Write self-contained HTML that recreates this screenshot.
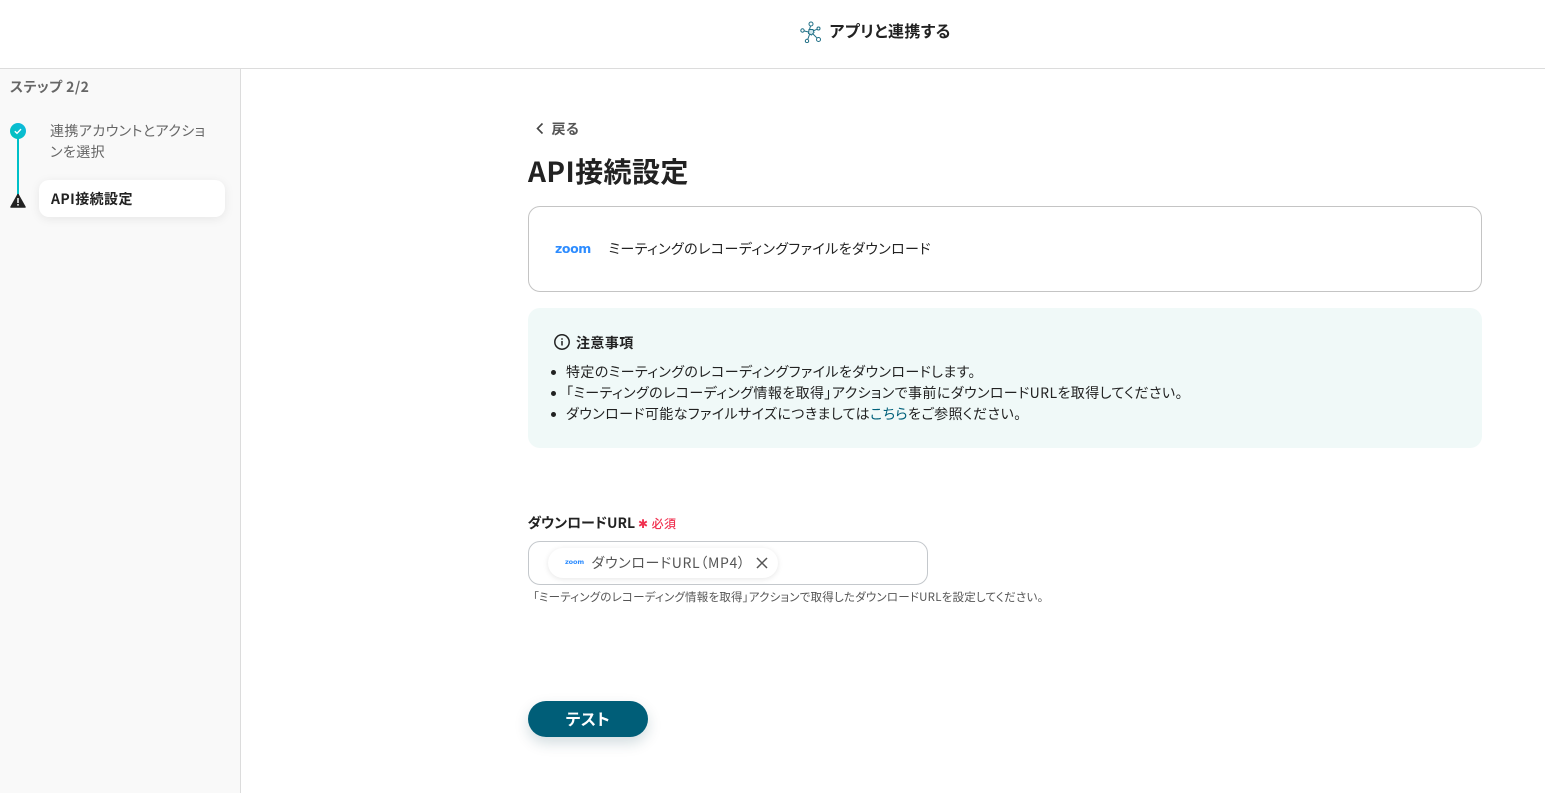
<!DOCTYPE html>
<html lang="ja"><head><meta charset="utf-8"><title>API接続設定</title>
<style>
html,body{margin:0;padding:0}
body{width:1545px;height:793px;overflow:hidden;background:#fff;position:relative;font-family:"Noto Sans CJK JP","Liberation Sans",sans-serif;color:#222;font-feature-settings:"palt";letter-spacing:.42px}
.a{position:absolute;white-space:nowrap}
.zoom{font-family:"DejaVu Sans",sans-serif;font-weight:700;color:#2d8cff}
</style></head><body>
<div class="a" style="left:0;top:68px;width:1545px;height:1px;background:#dcdcdc"></div>
<div class="a" style="left:0;top:69px;width:240px;height:724px;background:#f9f9f9;border-right:1px solid #dcdcdc"></div>

<svg class="a" style="left:799.500px;top:21px" width="22" height="22" viewBox="0 0 22 22" fill="none" stroke="#1f6f86" stroke-width="1">
<path d="M9.500 8.500L10.500 5M13 10L16.800 8.300M13 13L16.800 16.800M9.500 13.500L7.800 18.300M8.500 11L4.300 10" />
<path d="M9 8.500h4l1 3-2.500 2.500-3-1.500z" fill="#cfe6ec"/>
<circle cx="11" cy="3" r="2"/><circle cx="18.500" cy="7.500" r="1.500"/><circle cx="18.500" cy="18.500" r="2"/><circle cx="7" cy="20" r="1.700"/><circle cx="2.500" cy="9.500" r="1.700"/>
</svg>
<div class="a" style="left:829.500px;top:19px;font-size:16px;line-height:22px;font-weight:700;color:#222">アプリと連携する</div>

<div class="a" style="left:10px;top:77px;font-size:14px;line-height:20px;font-weight:700;color:#666">ステップ 2/2</div>
<div class="a" style="left:17px;top:131px;width:2px;height:64px;background:#00c0c8"></div>
<svg class="a" style="left:10px;top:123px" width="16" height="16" viewBox="0 0 16 16"><defs><linearGradient id="g" x1="0" y1="1" x2="1" y2="0"><stop offset="0" stop-color="#00c2b8"/><stop offset="1" stop-color="#10b8e0"/></linearGradient></defs><circle cx="8" cy="8" r="8" fill="url(#g)"/><path d="M4.800 8.200l2.200 2.100 4-4.200" fill="none" stroke="#fff" stroke-width="1.400"/></svg>
<svg class="a" style="left:10px;top:193px" width="16" height="15" viewBox="0 0 16 15"><path d="M8 1.500L15 14H1z" fill="#222" stroke="#222" stroke-width="1.500" stroke-linejoin="round"/><path d="M8 5v5M8 11v1.600" stroke="#fff" stroke-width="1.500"/></svg>
<div class="a" style="left:50px;top:121px;font-size:14px;line-height:21px;color:#666">連携アカウントとアクショ<br>ンを選択</div>
<div class="a" style="left:39px;top:180px;width:186px;height:37px;background:#fff;border-radius:10px;box-shadow:0 2px 10px rgba(0,0,0,.08)"></div>
<div class="a" style="left:51px;top:189px;font-size:14px;line-height:21px;font-weight:700;color:#222">API接続設定</div>

<svg class="a" style="left:535px;top:122px" width="10" height="13" viewBox="0 0 10 13"><path d="M7.500 1.500L2.500 6.500l5 5" fill="none" stroke="#444" stroke-width="1.600"/></svg>
<div class="a" style="left:551.500px;top:119px;font-size:14px;line-height:21px;font-weight:700;color:#555">戻る</div>
<div class="a" style="left:528px;top:152px;font-size:28px;line-height:38px;font-weight:700;color:#222">API接続設定</div>

<div class="a" style="left:528px;top:206px;width:952px;height:84px;border:1px solid #c4c4c4;border-radius:12px"></div>
<div class="a zoom" style="left:555px;top:240px;font-size:12.500px;line-height:17px;letter-spacing:-.4px">zoom</div>
<div class="a" style="left:608.500px;top:239px;font-size:14px;line-height:21px;color:#222">ミーティングのレコーディングファイルをダウンロード</div>

<div class="a" style="left:528px;top:308px;width:954px;height:140px;background:#f0f9f8;border-radius:12px"></div>
<svg class="a" style="left:553px;top:333px" width="18" height="18" viewBox="0 0 18 18" fill="none"><circle cx="9" cy="9" r="7.200" stroke="#222" stroke-width="1.500"/><path d="M9 8v4.500M9 5.200v1.500" stroke="#222" stroke-width="1.500"/></svg>
<div class="a" style="left:576px;top:333px;font-size:14px;line-height:21px;font-weight:700;color:#222">注意事項</div>
<div class="a" style="left:548px;top:368px;width:5px;height:5px;margin:2px 0 0 3px;border-radius:50%;background:#222"></div>
<div class="a" style="left:548px;top:389px;width:5px;height:5px;margin:2px 0 0 3px;border-radius:50%;background:#222"></div>
<div class="a" style="left:548px;top:410px;width:5px;height:5px;margin:2px 0 0 3px;border-radius:50%;background:#222"></div>
<div class="a" style="left:566px;top:362px;font-size:14px;line-height:21px;color:#222">特定のミーティングのレコーディングファイルをダウンロードします。</div>
<div class="a" style="left:566px;top:383px;font-size:14px;line-height:21px;color:#222">「ミーティングのレコーディング情報を取得」アクションで事前にダウンロードURLを取得してください。</div>
<div class="a" style="left:566px;top:404px;font-size:14px;line-height:21px;color:#222">ダウンロード可能なファイルサイズにつきましては<span style="color:#00607a">こちら</span>をご参照ください。</div>

<div class="a" style="left:527.500px;top:513px;font-size:14px;line-height:21px;font-weight:700;color:#222;letter-spacing:-.05px">ダウンロードURL</div>
<div class="a" style="left:638px;top:513px;font-size:12px;line-height:21px;color:#f0304f;font-weight:500">✱ 必須</div>
<div class="a" style="left:528px;top:541px;width:398px;height:42px;border:1px solid #c4c8cc;border-radius:12px"></div>
<div class="a" style="left:548px;top:548px;width:230px;height:30px;background:#fff;border-radius:15px;box-shadow:0 1px 6px rgba(0,0,0,.1)"></div>
<div class="a zoom" style="left:565px;top:557px;font-size:6.500px;line-height:11px;letter-spacing:-.1px">zoom</div>
<div class="a" style="left:591.500px;top:553px;font-size:14px;line-height:21px;color:#555;letter-spacing:.65px">ダウンロードURL（MP4）</div>
<svg class="a" style="left:755px;top:556px" width="14" height="14" viewBox="0 0 14 14"><path d="M2 2l10 10M12 2L2 12" stroke="#555" stroke-width="1.500"/></svg>
<div class="a" style="left:533px;top:589px;font-size:11.500px;line-height:17px;color:#555;letter-spacing:.22px">「ミーティングのレコーディング情報を取得」アクションで取得したダウンロードURLを設定してください。</div>

<div class="a" style="left:528px;top:701px;width:120px;height:36px;background:#005e78;border-radius:18px;box-shadow:0 6px 14px rgba(0,60,80,.18);text-align:center;color:#fff;font-size:16px;line-height:36px;font-weight:700"><span style="position:relative;top:-1px">テスト</span></div>
</body></html>
